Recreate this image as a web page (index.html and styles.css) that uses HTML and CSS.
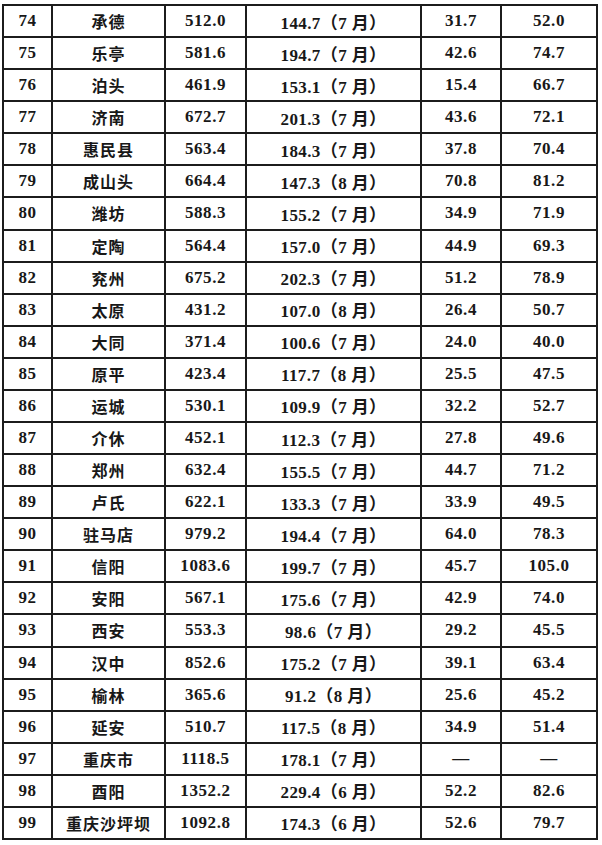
FILE: index.html
```html
<!DOCTYPE html>
<html lang="zh">
<head>
<meta charset="utf-8">
<title>表</title>
<link rel="stylesheet" href="styles.css">
</head>
<body>
<div class="sheet">
<div class="c">74</div><div class="c n">承德</div><div class="c">512.0</div><div class="c m">144.7（7 月）</div><div class="c">31.7</div><div class="c">52.0</div>
<div class="c">75</div><div class="c n">乐亭</div><div class="c">581.6</div><div class="c m">194.7（7 月）</div><div class="c">42.6</div><div class="c">74.7</div>
<div class="c">76</div><div class="c n">泊头</div><div class="c">461.9</div><div class="c m">153.1（7 月）</div><div class="c">15.4</div><div class="c">66.7</div>
<div class="c">77</div><div class="c n">济南</div><div class="c">672.7</div><div class="c m">201.3（7 月）</div><div class="c">43.6</div><div class="c">72.1</div>
<div class="c">78</div><div class="c n">惠民县</div><div class="c">563.4</div><div class="c m">184.3（7 月）</div><div class="c">37.8</div><div class="c">70.4</div>
<div class="c">79</div><div class="c n">成山头</div><div class="c">664.4</div><div class="c m">147.3（8 月）</div><div class="c">70.8</div><div class="c">81.2</div>
<div class="c">80</div><div class="c n">潍坊</div><div class="c">588.3</div><div class="c m">155.2（7 月）</div><div class="c">34.9</div><div class="c">71.9</div>
<div class="c">81</div><div class="c n">定陶</div><div class="c">564.4</div><div class="c m">157.0（7 月）</div><div class="c">44.9</div><div class="c">69.3</div>
<div class="c">82</div><div class="c n">兖州</div><div class="c">675.2</div><div class="c m">202.3（7 月）</div><div class="c">51.2</div><div class="c">78.9</div>
<div class="c">83</div><div class="c n">太原</div><div class="c">431.2</div><div class="c m">107.0（8 月）</div><div class="c">26.4</div><div class="c">50.7</div>
<div class="c">84</div><div class="c n">大同</div><div class="c">371.4</div><div class="c m">100.6（7 月）</div><div class="c">24.0</div><div class="c">40.0</div>
<div class="c">85</div><div class="c n">原平</div><div class="c">423.4</div><div class="c m">117.7（8 月）</div><div class="c">25.5</div><div class="c">47.5</div>
<div class="c">86</div><div class="c n">运城</div><div class="c">530.1</div><div class="c m">109.9（7 月）</div><div class="c">32.2</div><div class="c">52.7</div>
<div class="c">87</div><div class="c n">介休</div><div class="c">452.1</div><div class="c m">112.3（7 月）</div><div class="c">27.8</div><div class="c">49.6</div>
<div class="c">88</div><div class="c n">郑州</div><div class="c">632.4</div><div class="c m">155.5（7 月）</div><div class="c">44.7</div><div class="c">71.2</div>
<div class="c">89</div><div class="c n">卢氏</div><div class="c">622.1</div><div class="c m">133.3（7 月）</div><div class="c">33.9</div><div class="c">49.5</div>
<div class="c">90</div><div class="c n">驻马店</div><div class="c">979.2</div><div class="c m">194.4（7 月）</div><div class="c">64.0</div><div class="c">78.3</div>
<div class="c">91</div><div class="c n">信阳</div><div class="c">1083.6</div><div class="c m">199.7（7 月）</div><div class="c">45.7</div><div class="c">105.0</div>
<div class="c">92</div><div class="c n">安阳</div><div class="c">567.1</div><div class="c m">175.6（7 月）</div><div class="c">42.9</div><div class="c">74.0</div>
<div class="c">93</div><div class="c n">西安</div><div class="c">553.3</div><div class="c m">98.6（7 月）</div><div class="c">29.2</div><div class="c">45.5</div>
<div class="c">94</div><div class="c n">汉中</div><div class="c">852.6</div><div class="c m">175.2（7 月）</div><div class="c">39.1</div><div class="c">63.4</div>
<div class="c">95</div><div class="c n">榆林</div><div class="c">365.6</div><div class="c m">91.2（8 月）</div><div class="c">25.6</div><div class="c">45.2</div>
<div class="c">96</div><div class="c n">延安</div><div class="c">510.7</div><div class="c m">117.5（8 月）</div><div class="c">34.9</div><div class="c">51.4</div>
<div class="c">97</div><div class="c n">重庆市</div><div class="c">1118.5</div><div class="c m">178.1（7 月）</div><div class="c">—</div><div class="c">—</div>
<div class="c">98</div><div class="c n">酉阳</div><div class="c">1352.2</div><div class="c m">229.4（6 月）</div><div class="c">52.2</div><div class="c">82.6</div>
<div class="c">99</div><div class="c n">重庆沙坪坝</div><div class="c">1092.8</div><div class="c m">174.3（6 月）</div><div class="c">52.6</div><div class="c">79.7</div>
</div>
</body>
</html>
```

FILE: styles.css
```css
html, body {
  margin: 0;
  padding: 0;
  background: #ffffff;
}

body {
  padding: 4px 0 0 2px;
}

.sheet {
  display: grid;
  grid-template-columns: 47px 111px 79px 173px 78px 94px;
  grid-template-rows: repeat(26, 1fr);
  gap: 2px;
  padding: 2px;
  width: 596px;
  height: 836px;
  box-sizing: border-box;
  background: #1c1c1c;
}

.c {
  background: #ffffff;
  display: flex;
  align-items: center;
  justify-content: center;
  font-family: "Liberation Serif", "Noto Sans CJK SC", serif;
  font-weight: 700;
  font-size: 17px;
  letter-spacing: 0.6px;
  color: #181818;
  white-space: nowrap;
}

.n {
  font-size: 16px;
  letter-spacing: 1px;
}

.m {
  letter-spacing: 0.4px;
}
```
